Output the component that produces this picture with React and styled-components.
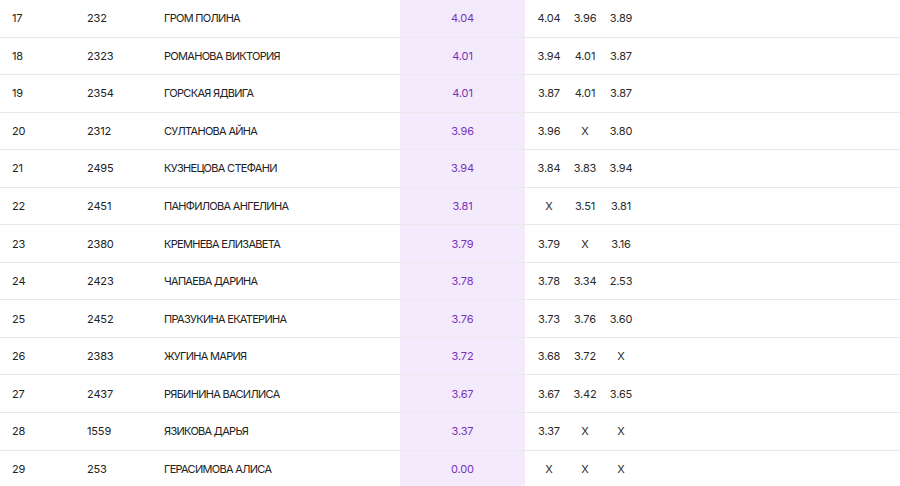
import React from 'react'
import styled, { createGlobalStyle } from 'styled-components'

const GlobalStyle = createGlobalStyle`
  html, body {
    margin: 0;
    padding: 0;
    background: #fff;
  }
  body {
    font-family: Inter, 'Noto Sans', sans-serif;
    color: #222;
  }
`

const rows = [
  [17, 232, 'ГРОМ ПОЛИНА', '4.04', ['4.04', '3.96', '3.89']],
  [18, 2323, 'РОМАНОВА ВИКТОРИЯ', '4.01', ['3.94', '4.01', '3.87']],
  [19, 2354, 'ГОРСКАЯ ЯДВИГА', '4.01', ['3.87', '4.01', '3.87']],
  [20, 2312, 'СУЛТАНОВА АЙНА', '3.96', ['3.96', 'X', '3.80']],
  [21, 2495, 'КУЗНЕЦОВА СТЕФАНИ', '3.94', ['3.84', '3.83', '3.94']],
  [22, 2451, 'ПАНФИЛОВА АНГЕЛИНА', '3.81', ['X', '3.51', '3.81']],
  [23, 2380, 'КРЕМНЕВА ЕЛИЗАВЕТА', '3.79', ['3.79', 'X', '3.16']],
  [24, 2423, 'ЧАПАЕВА ДАРИНА', '3.78', ['3.78', '3.34', '2.53']],
  [25, 2452, 'ПРАЗУКИНА ЕКАТЕРИНА', '3.76', ['3.73', '3.76', '3.60']],
  [26, 2383, 'ЖУГИНА МАРИЯ', '3.72', ['3.68', '3.72', 'X']],
  [27, 2437, 'РЯБИНИНА ВАСИЛИСА', '3.67', ['3.67', '3.42', '3.65']],
  [28, 1559, 'ЯЗИКОВА ДАРЬЯ', '3.37', ['3.37', 'X', 'X']],
  [29, 253, 'ГЕРАСИМОВА АЛИСА', '0.00', ['X', 'X', 'X']]
]

const Table = styled.div`
  width: 900px;
  height: 486px;
  overflow: hidden;
`

const Row = styled.div`
  display: grid;
  grid-template-columns: 75px 77px 236px 125px 6px 36px 36px 36px 1fr;
  height: 37.55px;
  box-sizing: border-box;
  padding-left: 12px;
  border-bottom: 1px solid #e9e9ec;
  font-size: 11px;
  letter-spacing: -0.15px;
`

const Cell = styled.div`
  display: flex;
  align-items: center;
  white-space: nowrap;
`

const Name = styled(Cell)`
  letter-spacing: -0.7px;
`

const Score = styled(Cell)`
  justify-content: center;
  background: #f3ebfc;
  color: #7a32bb;
`

const Attempt = styled(Cell)`
  justify-content: center;
  color: #2a2a2a;
`

const App = () => (
  <>
    <GlobalStyle />
    <Table>
      {rows.map(([place, num, name, best, tries]) => (
        <Row key={place}>
          <Cell>{place}</Cell>
          <Cell>{num}</Cell>
          <Name>{name}</Name>
          <Score>{best}</Score>
          <div />
          {tries.map((t, i) => (
            <Attempt key={i}>{t}</Attempt>
          ))}
          <div />
        </Row>
      ))}
    </Table>
  </>
)

export default App
